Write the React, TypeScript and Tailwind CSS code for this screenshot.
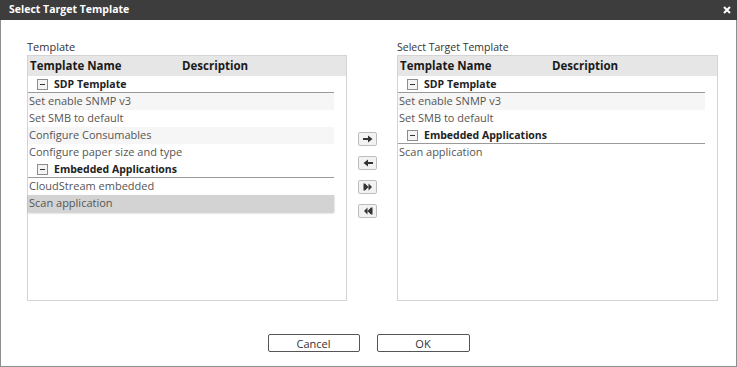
import React from 'react';

type Row = { kind: 'group' | 'item'; label: string; alt?: boolean; selected?: boolean };

const leftRows: Row[] = [
  { kind: 'group', label: 'SDP Template' },
  { kind: 'item', label: 'Set enable SNMP v3', alt: true },
  { kind: 'item', label: 'Set SMB to default' },
  { kind: 'item', label: 'Configure Consumables', alt: true },
  { kind: 'item', label: 'Configure paper size and type' },
  { kind: 'group', label: 'Embedded Applications' },
  { kind: 'item', label: 'CloudStream embedded' },
  { kind: 'item', label: 'Scan application', selected: true },
];

const rightRows: Row[] = [
  { kind: 'group', label: 'SDP Template' },
  { kind: 'item', label: 'Set enable SNMP v3', alt: true },
  { kind: 'item', label: 'Set SMB to default' },
  { kind: 'group', label: 'Embedded Applications' },
  { kind: 'item', label: 'Scan application' },
];

const MinusBox: React.FC = () => (
  <div className="w-[11px] h-[11px] border border-[#8c8c8c] bg-[#f4f4f4] flex items-center justify-center">
    <div className="w-[5px] h-[1px] bg-[#333]" />
  </div>
);

const Grid: React.FC<{ rows: Row[] }> = ({ rows }) => (
  <div className="h-[246px] border border-[#d4d4d4] bg-white">
    <div className="h-[20px] bg-[#e6e6e6] flex items-center pl-[2px] font-bold text-[11.5px] text-[#1a1a1a]">
      <div className="w-[152px]">Template Name</div>
      <div>Description</div>
    </div>
    <div className="mr-[12px]">
      {rows.map((r, i) =>
        r.kind === 'group' ? (
          <div key={i} className="h-[17px] flex items-center border-b border-[#9a9a9a] pl-[9px] gap-[6px]">
            <MinusBox />
            <span className="font-bold text-[10.5px] text-[#222] pt-px">{r.label}</span>
          </div>
        ) : (
          <div
            key={i}
            className={`h-[17px] flex items-center pl-[1px] text-[11px] text-[#555] ${
              r.selected ? 'bg-[#d3d3d3] shadow-[0_1px_2px_rgba(0,0,0,0.25)]' : r.alt ? 'bg-[#f6f6f6]' : ''
            }`}
          >
            {r.label}
          </div>
        )
      )}
    </div>
  </div>
);

const ArrowBtn: React.FC<{ children: React.ReactNode }> = ({ children }) => (
  <button className="w-[19px] h-[14px] border border-[#bdbdbd] bg-[#f2f2f2] rounded-[2px] flex items-center justify-center">
    {children}
  </button>
);

export default function App() {
  return (
    <div
      className="w-[737px] h-[367px] flex flex-col bg-white border-x border-b border-[#8e8e8e]"
      style={{ fontFamily: '"Open Sans", "Noto Sans", sans-serif' }}
    >
      <div className="h-[20px] bg-[#3d3d3d] flex items-center justify-between pl-[9px] pr-[6px] -mx-px">
        <span className="text-white font-bold text-[10.5px]">Select Target Template</span>
        <svg width="8" height="8" viewBox="0 0 8 8">
          <path d="M1 1 L7 7 M7 1 L1 7" stroke="#fff" strokeWidth="2" />
        </svg>
      </div>

      <div className="flex pl-[26px] pt-[20px]">
        <div className="w-[320px]">
          <div className="h-[15px] text-[11px] text-[#333] leading-[14px]">Template</div>
          <Grid rows={leftRows} />
        </div>

        <div className="w-[50px] pl-[11px] pt-[92px] flex flex-col gap-[10px]">
          <ArrowBtn>
            <svg width="10" height="8" viewBox="0 0 10 8">
              <path d="M0 3 H5 V0.5 L9.5 4 L5 7.5 V5 H0 Z" fill="#333" />
            </svg>
          </ArrowBtn>
          <ArrowBtn>
            <svg width="10" height="8" viewBox="0 0 10 8">
              <path d="M10 3 H5 V0.5 L0.5 4 L5 7.5 V5 H10 Z" fill="#333" />
            </svg>
          </ArrowBtn>
          <ArrowBtn>
            <svg width="10" height="8" viewBox="0 0 10 8">
              <path d="M0.5 0.5 V7.5 H2 V0.5 Z M2 0.5 L5.5 4 L2 7.5 Z M5.5 0.5 L9 4 L5.5 7.5 Z" fill="#333" />
            </svg>
          </ArrowBtn>
          <ArrowBtn>
            <svg width="10" height="8" viewBox="0 0 10 8">
              <path d="M9.5 0.5 V7.5 H8 V0.5 Z M8 0.5 L4.5 4 L8 7.5 Z M4.5 0.5 L1 4 L4.5 7.5 Z" fill="#333" />
            </svg>
          </ArrowBtn>
        </div>

        <div className="w-[321px]">
          <div className="h-[15px] text-[10.5px] text-[#333] leading-[14px]">Select Target Template</div>
          <Grid rows={rightRows} />
        </div>
      </div>

      <div className="flex justify-center gap-[17px] pt-[33px]">
        <button className="w-[92px] h-[18px] border border-[#555] rounded-[2px] bg-white text-[11px] text-[#333] leading-none">
          Cancel
        </button>
        <button className="w-[93px] h-[18px] border border-[#555] rounded-[2px] bg-white text-[11px] text-[#333] leading-none">
          OK
        </button>
      </div>
    </div>
  );
}
